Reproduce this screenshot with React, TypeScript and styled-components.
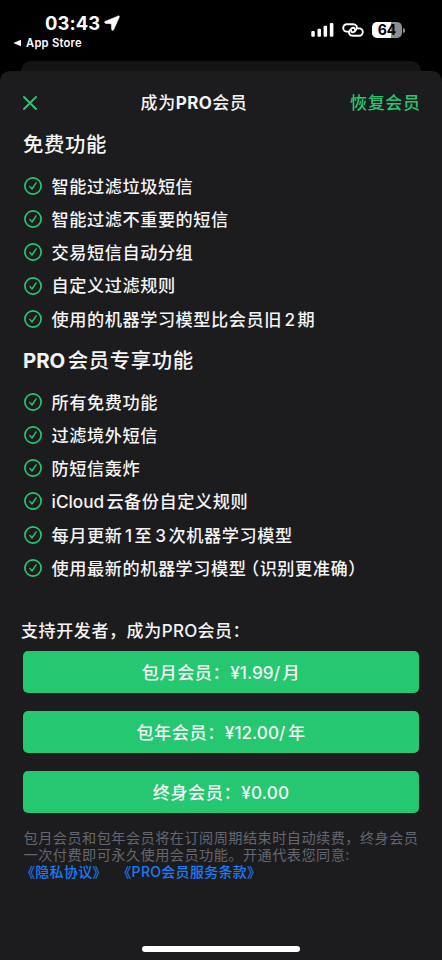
import React from "react";
import styled, { createGlobalStyle } from "styled-components";

const GREEN = "#25c770";

const GlobalStyle = createGlobalStyle`
  * { box-sizing: border-box; }
  body {
    margin: 0;
    background: #000;
    color: #f4f4f5;
    font-family: Inter, "Noto Sans CJK SC", sans-serif;
    text-spacing-trim: space-all;
    -webkit-font-smoothing: antialiased;
  }
  button { font: inherit; letter-spacing: inherit; color: inherit; border: 0; padding: 0; background: none; }
`;

const Screen = styled.div`
  display: flex;
  flex-direction: column;
  width: 442px;
  height: 960px;
  overflow: hidden;
  background: #000;
`;

const StatusBar = styled.header`
  display: flex;
  justify-content: space-between;
  height: 61px;
  padding: 11px 37px 0 13px;
`;

const StatusLeft = styled.div`
  display: flex;
  flex-direction: column;
`;

const Clock = styled.div`
  display: flex;
  align-items: center;
  gap: 4px;
  height: 23px;
  padding-left: 32px;
  font-size: 18.4px;
  font-weight: 650;
  letter-spacing: 0.1px;
  color: #fff;
`;

const BackToApp = styled.div`
  display: flex;
  align-items: center;
  gap: 4px;
  height: 18px;
  font-size: 11.2px;
  font-weight: 600;
  letter-spacing: 0.25px;
  color: #fff;
`;

const StatusRight = styled.div`
  display: flex;
  align-items: center;
  height: 38px;
`;

const BackSheet = styled.div`
  flex: none;
  height: 10px;
  margin: 0 21px;
  border-radius: 10px 10px 0 0;
  background: #141415;
`;

const Sheet = styled.main`
  flex: 1;
  display: flex;
  flex-direction: column;
  padding: 14px 23px 8.5px;
  border-radius: 10px 10px 0 0;
  background: #1c1c1e;
`;

const NavBar = styled.nav`
  display: grid;
  grid-template-columns: 26px 1fr 80px;
  align-items: center;
  height: 36px;
  margin-bottom: 8px;
  font-weight: 500;
`;

const CloseButton = styled.button`
  display: flex;
  width: 14px;
`;

const NavTitle = styled.h1`
  margin: 0;
  font-size: 17px;
  font-weight: 500;
  letter-spacing: 0.6px;
  line-height: 36px;
  text-align: center;
  white-space: nowrap;
`;

const RestoreButton = styled.button`
  justify-self: end;
  font-size: 17px;
  letter-spacing: 0.6px;
  line-height: 36px;
  margin-right: -1.5px;
  white-space: nowrap;
  color: ${GREEN};
`;

const SectionTitle = styled.h2`
  margin: 0 0 9.4px;
  padding-top: 1px;
  height: 31px;
  line-height: 30px;
  font-size: 20.4px;
  font-weight: 500;
  letter-spacing: 0.6px;
  white-space: nowrap;
`;

const FeatureList = styled.ul`
  list-style: none;
  margin: 0 0 9.6px;
  padding: 0 0 0 1px;
`;

const Feature = styled.li`
  display: flex;
  align-items: center;
  gap: 9.6px;
  height: 33.2px;
  font-size: 17.2px;
  font-weight: 500;
  letter-spacing: 0.53px;
  line-height: 31.2px;
  white-space: nowrap;
`;

const FeatureText = styled.span`
  padding-top: 1px;
`;

const Latin = styled.span<{ $before?: number; $after?: number; $track?: number; $bold?: boolean }>`
  margin-left: ${(p) => p.$before ?? 0}px;
  margin-right: ${(p) => p.$after ?? 0}px;
  letter-spacing: ${(p) => p.$track ?? 0}px;
  font-weight: ${(p) => (p.$bold ? 750 : "inherit")};
`;

const OpenParen = styled.span`
  margin-left: 4px;
  font-feature-settings: "halt";
`;

const SupportLabel = styled.p`
  margin: 26.6px 0 10.7px -2px;
  height: 20px;
  line-height: 20px;
  font-size: 17px;
  font-weight: 500;
  letter-spacing: 0.6px;
  white-space: nowrap;
`;

const Plans = styled.div`
  display: flex;
  flex-direction: column;
  gap: 18.6px;
`;

const PlanButton = styled.button`
  height: 41.4px;
  padding-top: 2px;
  line-height: 39.4px;
  border-radius: 5px;
  background: ${GREEN};
  font-size: 17.2px;
  font-weight: 500;
  letter-spacing: 0.5px;
  text-align: center;
  white-space: nowrap;
`;

const Terms = styled.p`
  margin: 16.2px -10px 0 0.5px;
  font-size: 14.2px;
  line-height: 17.2px;
  letter-spacing: 0.44px;
  white-space: nowrap;
  color: #646670;
`;

const TermsLinks = styled.span`
  display: flex;
  gap: 10.5px;
  margin-left: -2.5px;
`;

const TermsLink = styled.a`
  color: #1a7cf6;
  font-size: 14px;
  letter-spacing: 0.3px;
  font-weight: 500;
`;

const HomeIndicator = styled.div`
  width: 158px;
  height: 5.5px;
  margin: auto auto 0;
  border-radius: 3px;
  background: #fff;
`;

const LocationIcon = () => (
  <svg width="16" height="16" viewBox="0 0 16 16">
    <path d="M14.2 1 1.3 6.3C.2 6.9.4 8.3 1.7 8.4L7.3 8.7 7.6 14.3C7.7 15.6 9.1 15.8 9.7 14.7L15.3 2.1C15.6 1.2 15 .6 14.2 1Z" fill="#fff" stroke="#fff" strokeWidth="0.5" />
  </svg>
);

const BackTriangle = () => (
  <svg width="9" height="8" viewBox="0 0 9 8">
    <path d="M0.4 4 8 .7V7.3Z" fill="#fff" />
  </svg>
);

const SignalIcon = () => (
  <svg width="23" height="16" viewBox="0 0 23 16" fill="#fff">
    <rect x="0.3" y="9" width="3.5" height="5.8" rx="1" />
    <rect x="6.5" y="6.7" width="3.5" height="8.1" rx="1" />
    <rect x="12.6" y="3.8" width="3.5" height="11" rx="1" />
    <rect x="18.8" y="0.9" width="3.6" height="13.9" rx="1" />
  </svg>
);

const HotspotIcon = styled.svg`
  margin-left: 8px;
`;

const Battery = styled.div`
  display: flex;
  align-items: center;
  margin-left: 8px;
`;

const BatteryBody = styled.div`
  width: 30px;
  height: 16px;
  border-radius: 5px;
  background: linear-gradient(90deg, #fff 64%, #8e8e8e 64%);
  color: #000;
  font-size: 14px;
  font-weight: 750;
  line-height: 16px;
  text-align: center;
`;

const BatteryCap = styled.div`
  width: 2px;
  height: 5px;
  margin-left: 1px;
  border-radius: 0 2px 2px 0;
  background: #8e8e8e;
`;

const CloseIcon = () => (
  <svg width="14" height="14" viewBox="0 0 14 14">
    <path d="M1 1 13 13M13 1 1 13" stroke={GREEN} strokeWidth="1.9" strokeLinecap="round" />
  </svg>
);

const CheckIcon = () => (
  <svg width="18" height="18" viewBox="0 0 18 18" fill="none" stroke={GREEN}>
    <circle cx="9" cy="9" r="8.1" strokeWidth="1.7" />
    <path d="M5.8 9.4 8 12 12.1 5.9" strokeWidth="1.4" strokeLinecap="round" strokeLinejoin="round" />
  </svg>
);

const freeFeatures: React.ReactNode[] = [
  "智能过滤垃圾短信",
  "智能过滤不重要的短信",
  "交易短信自动分组",
  "自定义过滤规则",
  <>使用的机器学习模型比会员旧<Latin $before={2.5} $after={2.5}>2</Latin>期</>,
];

const proFeatures: React.ReactNode[] = [
  "所有免费功能",
  "过滤境外短信",
  "防短信轰炸",
  <><Latin $after={2.2}>iCloud</Latin>云备份自定义规则</>,
  <>每月更新<Latin $before={2.5} $after={2.5}>1</Latin>至<Latin $before={3} $after={2.5}>3</Latin>次机器学习模型</>,
  <>使用最新的机器学习模型<OpenParen>（</OpenParen>识别更准确）</>,
];

const Features = ({ items }: { items: React.ReactNode[] }) => (
  <FeatureList>
    {items.map((item, i) => (
      <Feature key={i}>
        <CheckIcon />
        <FeatureText>{item}</FeatureText>
      </Feature>
    ))}
  </FeatureList>
);

export default function App() {
  return (
    <>
      <GlobalStyle />
      <Screen>
        <StatusBar>
          <StatusLeft>
            <Clock>
              03:43
              <LocationIcon />
            </Clock>
            <BackToApp>
              <BackTriangle />
              App Store
            </BackToApp>
          </StatusLeft>
          <StatusRight>
            <SignalIcon />
            <HotspotIcon width="22" height="14" viewBox="0 0 22 14" fill="none" stroke="#fff" strokeWidth="1.9" strokeLinecap="round">
              <path d="M6.6 8.6H4.9A3.7 3.7 0 0 1 4.9 1.2H11.2C14.8 1.2 16 4.6 14 6.8L12.4 8.6C11.2 9.9 8.9 9.3 9.2 7.6" />
              <path d="M15.4 5.4H17.1A3.7 3.7 0 0 1 17.1 12.8H10.8C7.2 12.8 6 9.4 8 7.2L9.6 5.4C10.8 4.1 13.1 4.7 12.8 6.4" />
            </HotspotIcon>
            <Battery>
              <BatteryBody>64</BatteryBody>
              <BatteryCap />
            </Battery>
          </StatusRight>
        </StatusBar>
        <BackSheet />
        <Sheet>
          <NavBar>
            <CloseButton aria-label="关闭">
              <CloseIcon />
            </CloseButton>
            <NavTitle>
              成为<Latin $bold $track={0.4}>PRO</Latin>会员
            </NavTitle>
            <RestoreButton>恢复会员</RestoreButton>
          </NavBar>

          <SectionTitle>免费功能</SectionTitle>
          <Features items={freeFeatures} />

          <SectionTitle>
            <Latin $bold $after={2.5}>PRO</Latin>会员专享功能
          </SectionTitle>
          <Features items={proFeatures} />

          <SupportLabel>
            支持开发者，成为<Latin $track={0.2}>PRO</Latin>会员：
          </SupportLabel>
          <Plans>
            <PlanButton>
              包月会员：<Latin $after={2.5}>¥1.99/</Latin>月
            </PlanButton>
            <PlanButton>
              包年会员：<Latin $after={2.5}>¥12.00/</Latin>年
            </PlanButton>
            <PlanButton>
              终身会员：<Latin $track={0.2}>¥0.00</Latin>
            </PlanButton>
          </Plans>

          <Terms>
            包月会员和包年会员将在订阅周期结束时自动续费，终身会员
            <br />
            一次付费即可永久使用会员功能。开通代表您同意:
            <TermsLinks>
              <TermsLink>《隐私协议》</TermsLink>
              <TermsLink>《PRO会员服务条款》</TermsLink>
            </TermsLinks>
          </Terms>
          <HomeIndicator />
        </Sheet>
      </Screen>
    </>
  );
}
